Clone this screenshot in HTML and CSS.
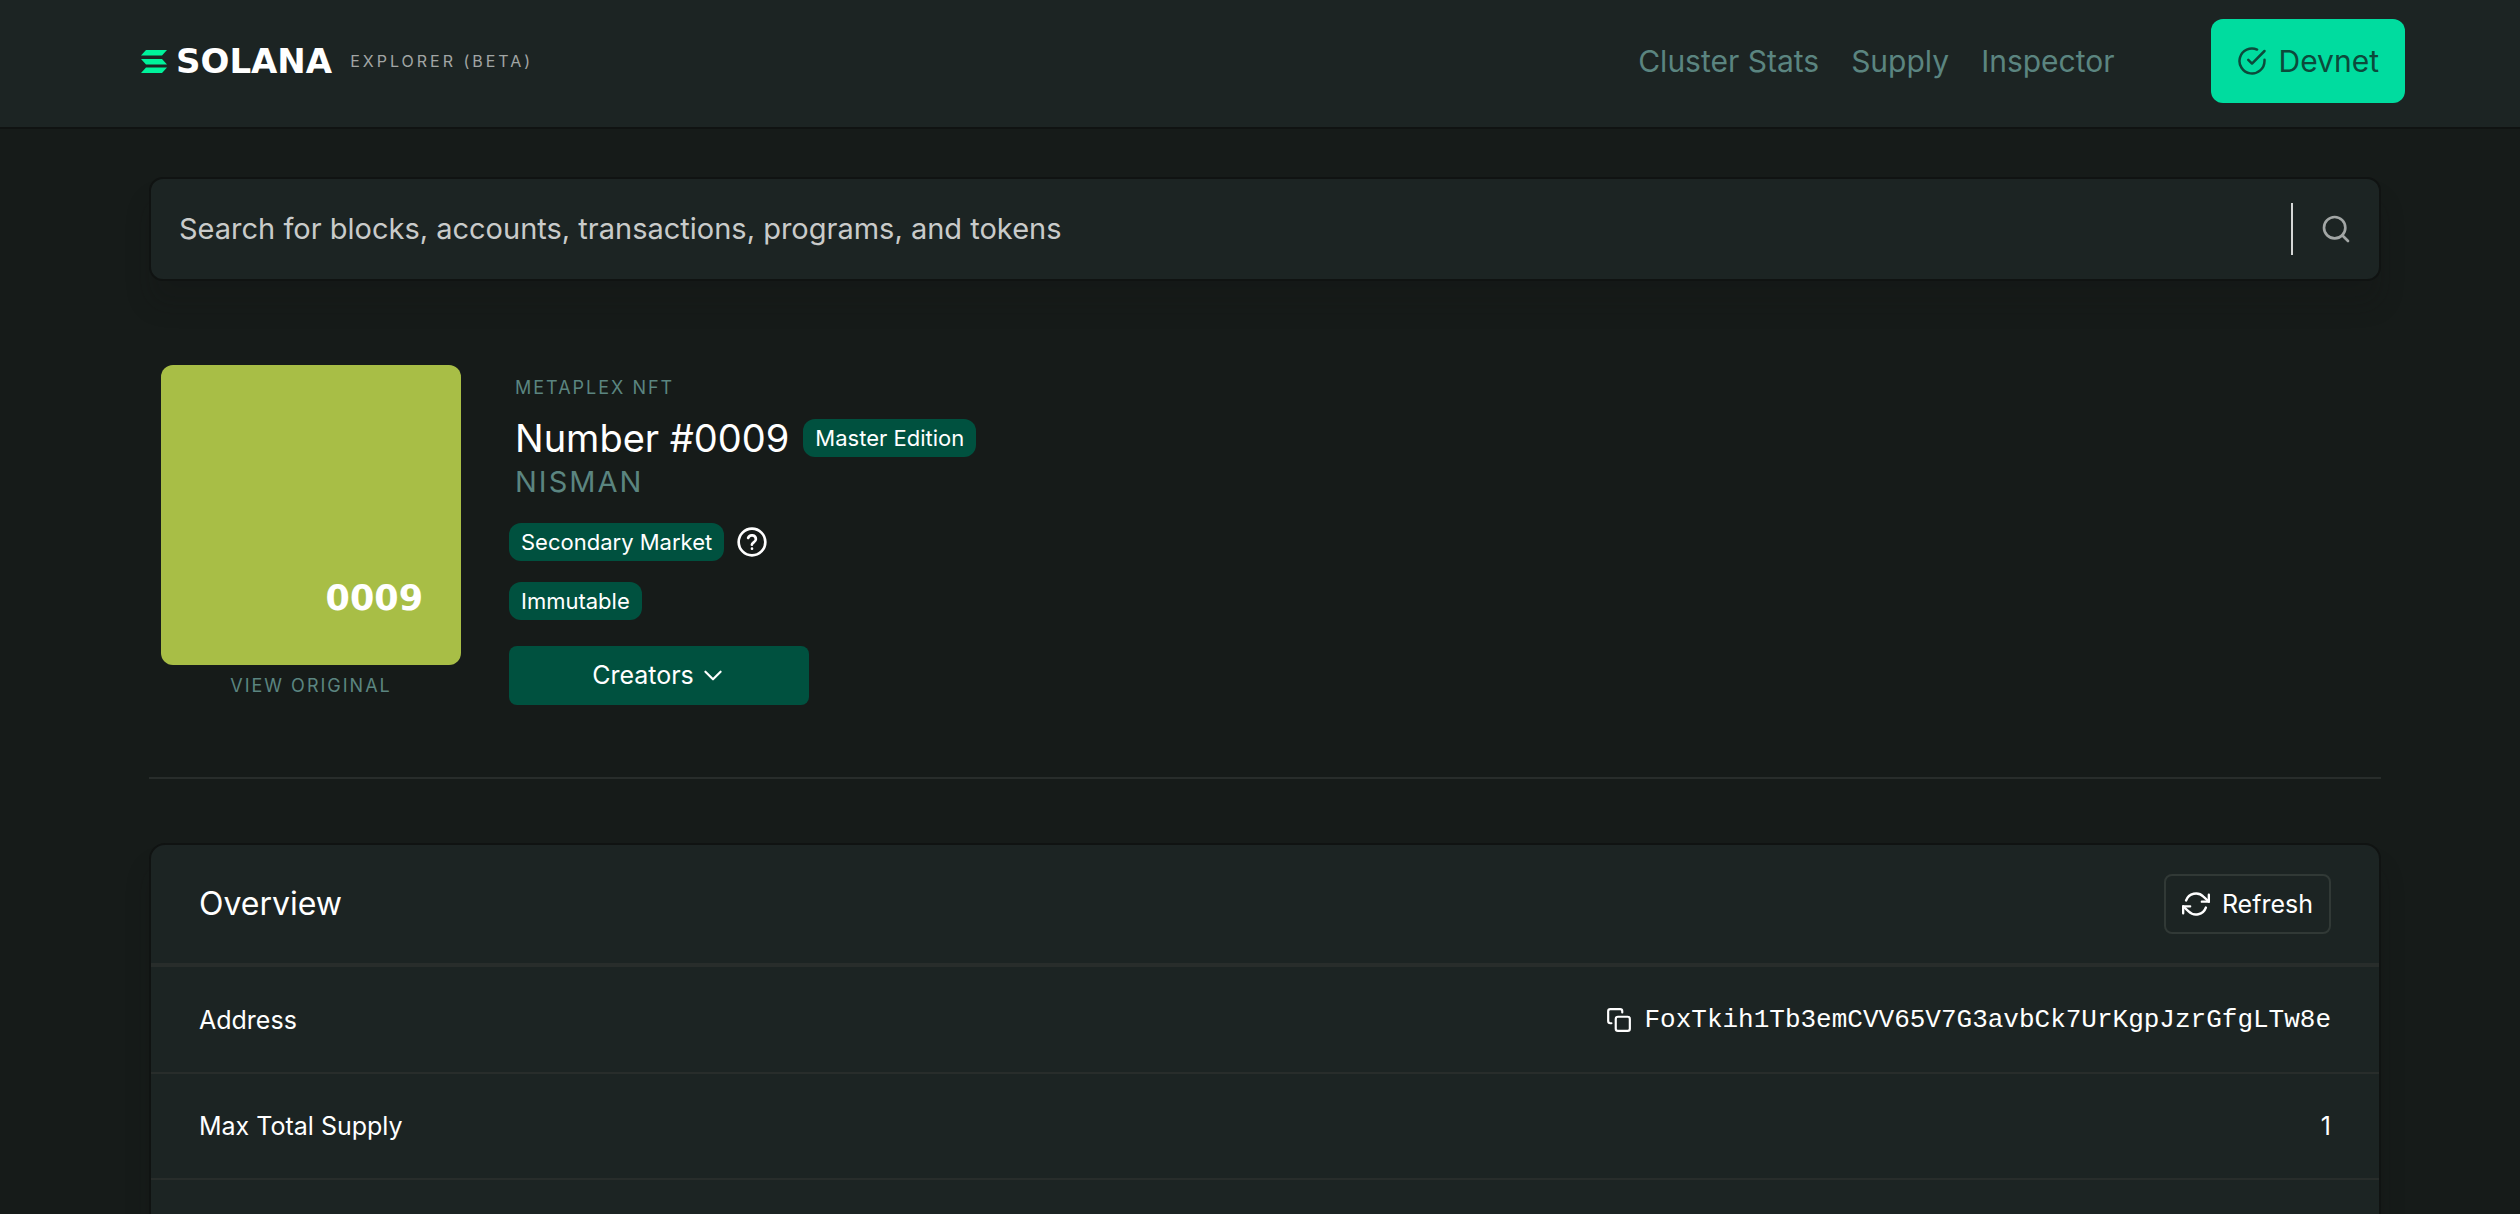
FILE: index.html
```html
<!DOCTYPE html>
<html lang="en">
<head>
<meta charset="utf-8">
<meta name="viewport" content="width=device-width, initial-scale=1">
<title>Explorer | Solana</title>
<link rel="stylesheet" href="styles.css">
</head>
<body>
<header class="navbar">
  <a class="brand" href="#">
    <svg class="brand-mark" viewBox="0 0 26 23" aria-hidden="true">
      <path d="M5 0h21l-5 5.5H0zM0 9h21l5 5.5H5zM5 17.5h21l-5 5.5H0z"/>
    </svg>
    <span class="brand-name">SOLANA</span>
    <span class="brand-sub">EXPLORER (BETA)</span>
  </a>
  <nav class="nav-links">
    <a href="#">Cluster Stats</a>
    <a href="#">Supply</a>
    <a href="#">Inspector</a>
  </nav>
  <button class="cluster-btn" type="button">
    <svg class="icon icon-nav" viewBox="0 0 24 24" aria-hidden="true"><path d="M22 11.08V12a10 10 0 1 1-5.93-9.14"/><path d="M22 4 12 14.01l-3-3"/></svg>
    Devnet
  </button>
</header>

<main class="container">
  <form class="search">
    <input class="search-input" type="text" aria-label="Search" placeholder="Search for blocks, accounts, transactions, programs, and tokens">
    <button class="search-btn" type="button" aria-label="Search">
      <svg class="icon icon-search" viewBox="0 0 24 24" aria-hidden="true"><circle cx="11" cy="11" r="8"/><path d="m21 21-4.35-4.35"/></svg>
    </button>
  </form>

  <section class="nft">
    <figure class="art">
      <div class="art-image"><span>0009</span></div>
      <figcaption><a class="eyebrow" href="#">VIEW ORIGINAL</a></figcaption>
    </figure>
    <div class="details">
      <p class="eyebrow inset">METAPLEX NFT</p>
      <div class="title-row inset">
        <h1>Number #0009</h1>
        <span class="badge">Master Edition</span>
      </div>
      <p class="symbol inset">NISMAN</p>
      <div class="badge-row">
        <span class="badge">Secondary Market</span>
        <svg class="icon icon-help" viewBox="0 0 24 24" role="img" aria-label="Help"><circle cx="12" cy="12" r="10"/><path d="M9.09 9a3 3 0 0 1 5.83 1c0 2-3 2.5-3 4M12 17h.01"/></svg>
      </div>
      <div class="badge-row">
        <span class="badge">Immutable</span>
      </div>
      <button class="creators" type="button">
        Creators
        <svg class="icon icon-chevron" viewBox="0 0 24 24" aria-hidden="true"><path d="m5 9 7 7 7-7"/></svg>
      </button>
    </div>
  </section>

  <section class="card">
    <div class="card-header">
      <h2>Overview</h2>
      <button class="refresh" type="button">
        <svg class="icon icon-refresh" viewBox="0 0 24 24" aria-hidden="true"><path d="M23 4v6h-6M1 20v-6h6"/><path d="M3.51 9a9 9 0 0 1 14.85-3.36L23 10M1 14l4.64 4.36A9 9 0 0 0 20.49 15"/></svg>
        Refresh
      </button>
    </div>
    <table class="rows">
      <tbody>
        <tr>
          <th scope="row">Address</th>
          <td>
            <span class="address">
              <svg class="icon icon-copy" viewBox="0 0 24 24" role="img" aria-label="Copy"><rect x="9" y="9" width="13" height="13" rx="2"/><path d="M5 15H4a2 2 0 0 1-2-2V4a2 2 0 0 1 2-2h9a2 2 0 0 1 2 2v1"/></svg>
              <code>FoxTkih1Tb3emCVV65V7G3avbCk7UrKgpJzrGfgLTw8e</code>
            </span>
          </td>
        </tr>
        <tr>
          <th scope="row">Max Total Supply</th>
          <td>1</td>
        </tr>
        <tr>
          <th scope="row"></th>
          <td></td>
        </tr>
      </tbody>
    </table>
  </section>
</main>
</body>
</html>
```
FILE: styles.css
```css
:root {
  --bg: #161b19;
  --panel: #1c2423;
  --edge: #101312;
  --line: #282d2b;
  --muted: #5b8580;
  --badge: #00513f;
  --accent: #00dc9f;
}

* { box-sizing: border-box; }

body {
  margin: 0;
  min-height: 100vh;
  overflow: hidden;
  background: var(--bg);
  color: #fff;
  font-family: Inter, "Liberation Sans", sans-serif;
  font-size: 25px;
  line-height: 40px;
}

h1, h2, p, figure { margin: 0; font-weight: 400; }
a { color: inherit; text-decoration: none; }
button { font: inherit; color: inherit; border: 0; cursor: pointer; }

.icon {
  flex: none;
  fill: none;
  stroke: currentColor;
  stroke-width: 2;
  stroke-linecap: round;
  stroke-linejoin: round;
}

/* Top bar */
.navbar {
  display: flex;
  align-items: center;
  height: 129px;
  padding: 0 115px 5px 141px;
  background: var(--panel);
  border-bottom: 2px solid var(--edge);
}
.brand { display: flex; align-items: center; margin-right: auto; }
.brand-mark { width: 26px; height: 23px; margin-right: 9px; fill: #00f29b; }
.brand-name { font: bold 34px/40px "DejaVu Sans", sans-serif; }
.brand-sub {
  margin-left: 18px;
  color: #a2a6a5;
  font-size: 16px;
  letter-spacing: 3px;
}
.nav-links { display: flex; gap: 32px; margin-right: 96px; color: var(--muted); font-size: 30px; }
.cluster-btn {
  display: flex;
  align-items: center;
  gap: 12px;
  height: 84px;
  padding: 0 26px;
  border-radius: 12px;
  background: var(--accent);
  color: #0c4a3b;
  font-size: 30px;
}
.icon-nav { width: 30px; height: 30px; }

/* Page body */
.container { padding: 48px 139px 0 149px; }

.search {
  display: flex;
  align-items: center;
  height: 104px;
  border: 2px solid var(--edge);
  border-radius: 14px;
  background: var(--panel);
  box-shadow: 0 24px 24px rgba(18, 21, 20, .2);
}
.search-input {
  flex: 1;
  min-width: 0;
  padding: 0 28px;
  border: 0;
  outline: 0;
  background: none;
  color: #fff;
  font: inherit;
  font-size: 29px;
}
.search-input::placeholder { color: #c9cbca; opacity: 1; }
.search-btn {
  height: 52px;
  padding: 0 27px;
  border-left: 2px solid #d5d7d6;
  background: none;
  color: #a2a6a5;
}
.icon-search { display: block; width: 32px; height: 32px; }

/* Token summary */
.nft {
  display: flex;
  gap: 48px;
  margin-top: 84px;
  padding: 0 12px 72px;
  border-bottom: 2px solid var(--line);
}
.art { width: 300px; text-align: center; }
.art-image {
  display: flex;
  align-items: flex-end;
  justify-content: flex-end;
  height: 300px;
  padding: 0 38px 47px;
  border-radius: 12px;
  background: #a8be46;
  font: bold 35px/40px "DejaVu Sans", sans-serif;
}
.eyebrow { display: block; color: var(--muted); font-size: 18px; letter-spacing: 2px; }
.art .eyebrow { padding-top: 2px; line-height: 38px; }
.details { display: flex; flex-direction: column; align-items: flex-start; }
.inset { padding-left: 6px; }
.details .eyebrow { margin-top: 3px; }
.title-row { display: flex; align-items: center; gap: 14px; margin-top: 10px; }
h1 { font-size: 38px; line-height: 40px; }
.symbol { margin-top: 4px; color: var(--muted); font-size: 29px; letter-spacing: 2px; }
.badge {
  padding: 0 12px;
  border-radius: 12px;
  background: var(--badge);
  font-size: 22px;
  line-height: 38px;
}
.badge-row { display: flex; align-items: center; gap: 12px; height: 38px; margin-top: 21px; }
.icon-help { width: 32px; height: 32px; }
.creators {
  display: flex;
  align-items: center;
  justify-content: center;
  gap: 6px;
  width: 300px;
  height: 59px;
  margin-top: 26px;
  padding-bottom: 3px;
  border-radius: 8px;
  background: var(--badge);
}
.icon-chevron { width: 26px; height: 26px; }

/* Overview card */
.card {
  margin-top: 64px;
  border: 2px solid var(--edge);
  border-radius: 16px;
  background: var(--panel);
  box-shadow: 0 24px 24px rgba(18, 21, 20, .2);
}
.card-header {
  display: flex;
  align-items: center;
  justify-content: space-between;
  height: 122px;
  padding: 0 48px;
  border-bottom: 4px solid var(--line);
}
h2 { font-size: 32px; }
.refresh {
  display: flex;
  align-items: center;
  gap: 12px;
  height: 60px;
  padding: 0 16px;
  border: 2px solid #313936;
  border-radius: 8px;
  background: none;
}
.icon-refresh { width: 28px; height: 28px; }
.rows { width: 100%; border-collapse: collapse; }
.rows tr { border-bottom: 2px solid var(--line); }
.rows th, .rows td { height: 106px; padding: 32px 48px; font-weight: 400; }
.rows th { text-align: left; }
.rows td { text-align: right; }
.address { display: flex; align-items: center; justify-content: flex-end; gap: 12px; }
.icon-copy { width: 26px; height: 26px; }
code { font: 26px/40px "Liberation Mono", monospace; }
```
